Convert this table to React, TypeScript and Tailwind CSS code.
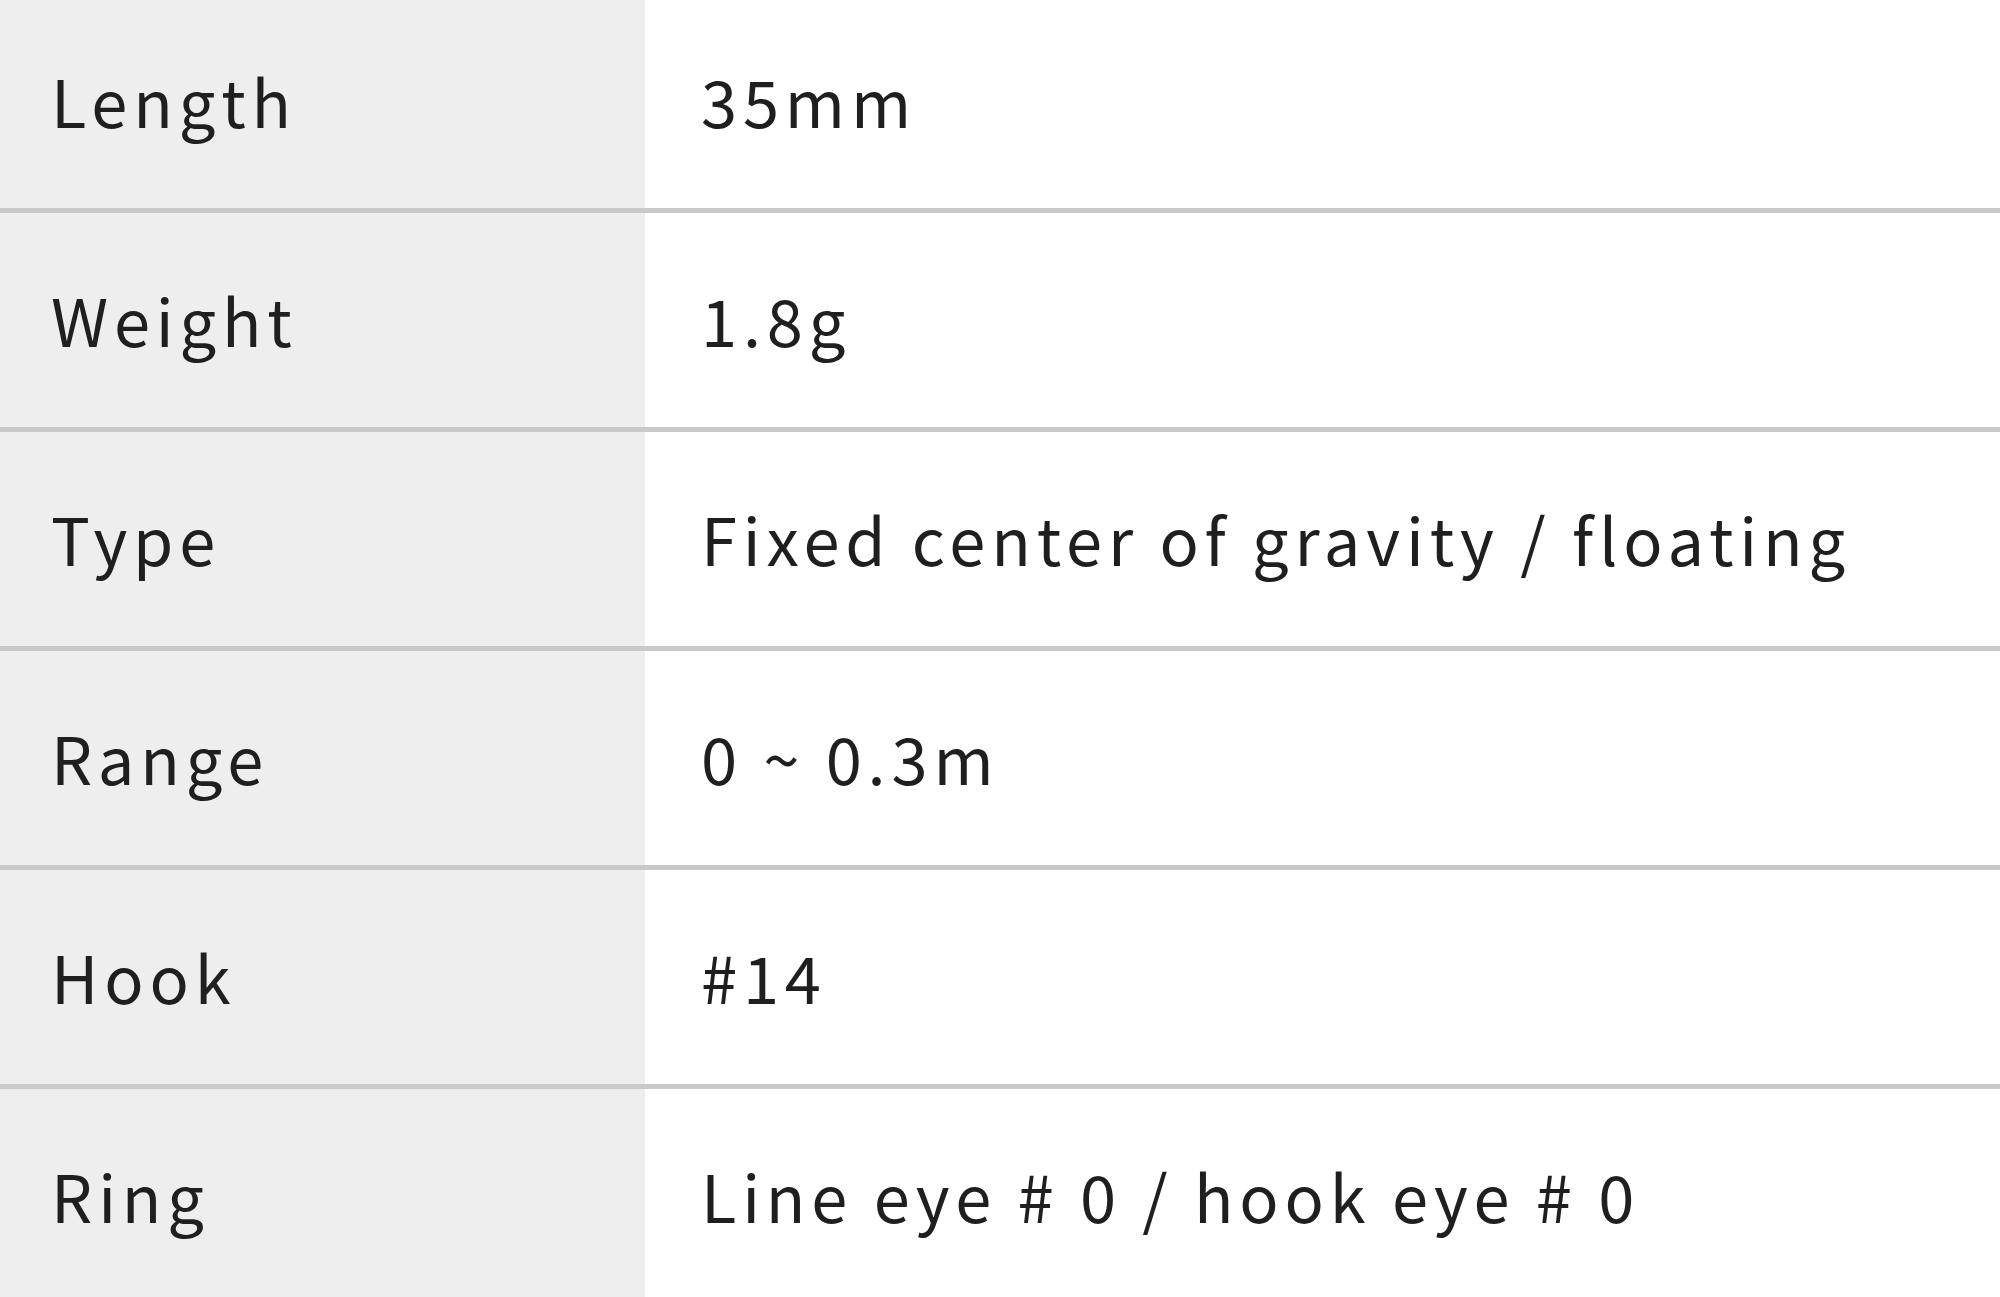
const specs = [
    { label: "Length", value: "35mm" },
    { label: "Weight", value: "1.8g" },
    { label: "Type", value: "Fixed center of gravity / floating" },
    { label: "Range", value: "0 ~ 0.3m" },
    { label: "Hook", value: "#14" },
    { label: "Ring", value: "Line eye # 0 / hook eye # 0" },
];

export default function App() {
    return (
        <div
            className="w-[2000px] h-[1297px] overflow-hidden bg-white text-[#1f1f1f]"
            style={{ fontFamily: '"Noto Sans CJK JP", "Noto Sans", sans-serif' }}
        >
            {/* SPEC TABLE */}
            <div className="flex flex-col -mt-[6px]">
                {specs.map((item) => (
                    <div
                        key={item.label}
                        className="flex h-[219px] border-b-[5px] border-[#c9c9c9]"
                    >
                        <div className="w-[645px] shrink-0 bg-[#eeeeee] flex items-center pl-[51px] text-[65px] tracking-[0.09em]">
                            {item.label}
                        </div>
                        <div className="flex-1 flex items-center pl-[56px] text-[65px] tracking-[0.09em]">
                            {item.value}
                        </div>
                    </div>
                ))}
            </div>
        </div>
    );
}
